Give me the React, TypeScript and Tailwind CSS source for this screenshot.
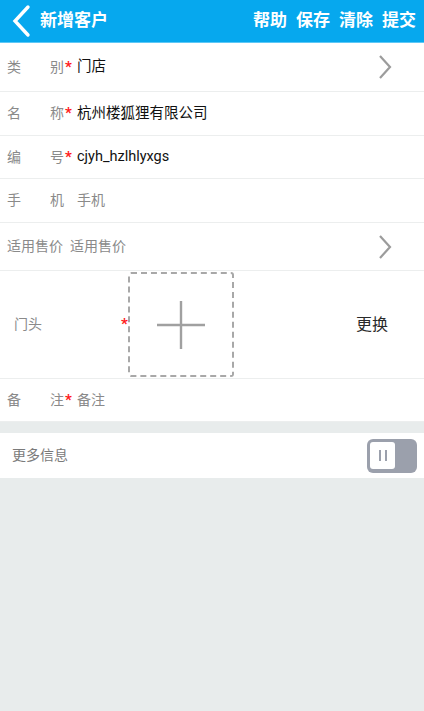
import React from "react";

const font = { fontFamily: '"Roboto", "Noto Sans CJK SC", sans-serif' };

function Chevron() {
  return (
    <svg width="14" height="26" viewBox="0 0 14 26" className="shrink-0">
      <path d="M2 2 L12 13 L2 24" fill="none" stroke="#9c9c9c" strokeWidth="2.2" />
    </svg>
  );
}

function Star() {
  return <span className="text-[#ff1a1a] text-[15px] leading-none font-bold">*</span>;
}

function Row({
  l1,
  l2,
  star,
  value,
  placeholder,
  chevron,
  h,
}: {
  l1: string;
  l2?: string;
  star?: boolean;
  value: string;
  placeholder?: boolean;
  chevron?: boolean;
  h: string;
}) {
  return (
    <div className={`flex items-center bg-white border-b border-[#eceeee] pl-[7px] pr-[32px] ${h}`}>
      {l2 ? (
        <div className="flex justify-between w-[57px] text-[14px] text-[#8a8a8a]">
          <span>{l1}</span>
          <span>{l2}</span>
        </div>
      ) : (
        <div className="text-[14px] text-[#8a8a8a]">{l1}</div>
      )}
      <div className="w-[13px] flex items-center pl-[1px]">{star ? <Star /> : null}</div>
      <div className={`flex-1 ${placeholder ? "text-[14px] text-[#8a8a8a]" : "text-[14.5px] text-[#111111]"}`}>{value}</div>
      {chevron ? <Chevron /> : null}
    </div>
  );
}

export default function App() {
  return (
    <div className="w-[424px] h-[711px] bg-[#e8ecec] flex flex-col" style={font}>
      <div className="h-[43px] bg-[#06a8ee] border-b border-[#5ec8f6] flex items-center text-white">
        <svg width="24" height="34" viewBox="0 0 24 34" className="ml-[10px]">
          <path d="M18 3 L5 17 L18 31" fill="none" stroke="#ffffff" strokeWidth="3.4" strokeLinecap="round" />
        </svg>
        <div className="ml-[6px] text-[17px] font-bold">新增客户</div>
        <div className="flex-1" />
        <div className="flex gap-[9px] pr-[8px] text-[17px] font-bold">
          <span>帮助</span>
          <span>保存</span>
          <span>清除</span>
          <span>提交</span>
        </div>
      </div>
      <div className="flex items-center bg-white border-b border-[#eceeee] pl-[7px] pr-[32px] h-[49px]">
        <div className="flex justify-between w-[57px] text-[14px] text-[#8a8a8a]">
          <span>类</span>
          <span>别</span>
        </div>
        <div className="w-[13px] flex items-center pl-[1px]"><Star /></div>
        <div className="flex-1 text-[14.5px] text-[#111111]">门店</div>
        <Chevron />
      </div>
      <Row l1="名" l2="称" star value="杭州楼狐狸有限公司" h="h-[44px]" />
      <Row l1="编" l2="号" star value="cjyh_hzlhlyxgs" h="h-[43px]" />
      <Row l1="手" l2="机" value="手机" placeholder h="h-[44px]" />
      <div className="flex items-center bg-white border-b border-[#eceeee] pl-[7px] pr-[32px] h-[48px]">
        <div className="text-[14px] text-[#8a8a8a]">适用售价</div>
        <div className="ml-[7px] flex-1 text-[14px] text-[#8a8a8a]">适用售价</div>
        <Chevron />
      </div>
      <div className="flex items-center bg-white border-b border-[#eceeee] h-[108px]">
        <div className="pl-[14px] w-[121px] text-[14px] text-[#8a8a8a]">门头</div>
        <div className="w-[7px] flex items-center"><Star /></div>
        <div className="w-[106px] h-[105px] border-2 border-dashed border-[#a8a8a8] rounded-[3px] flex items-center justify-center">
          <svg width="50" height="50" viewBox="0 0 50 50">
            <path d="M25 1 V49 M1 25 H49" stroke="#a0a0a0" strokeWidth="2.4" />
          </svg>
        </div>
        <div className="flex-1" />
        <div className="pr-[36px] text-[16px] text-[#2a2a2a]">更换</div>
      </div>
      <Row l1="备" l2="注" star value="备注" placeholder h="h-[43px]" />
      <div className="mt-[11px] h-[45px] bg-white flex items-center pl-[12px] pr-[7px]">
        <div className="flex-1 text-[14px] text-[#7a7a7a]">更多信息</div>
        <div className="w-[50px] h-[34px] rounded-[6px] bg-[#9ba0ac] flex items-center pl-[3px]">
          <div className="w-[25px] h-[27px] bg-white rounded-[3px] flex items-center justify-center gap-[4px]">
            <div className="w-[2px] h-[11px] bg-[#9ba0ac]" />
            <div className="w-[2px] h-[11px] bg-[#9ba0ac]" />
          </div>
        </div>
      </div>
    </div>
  );
}
